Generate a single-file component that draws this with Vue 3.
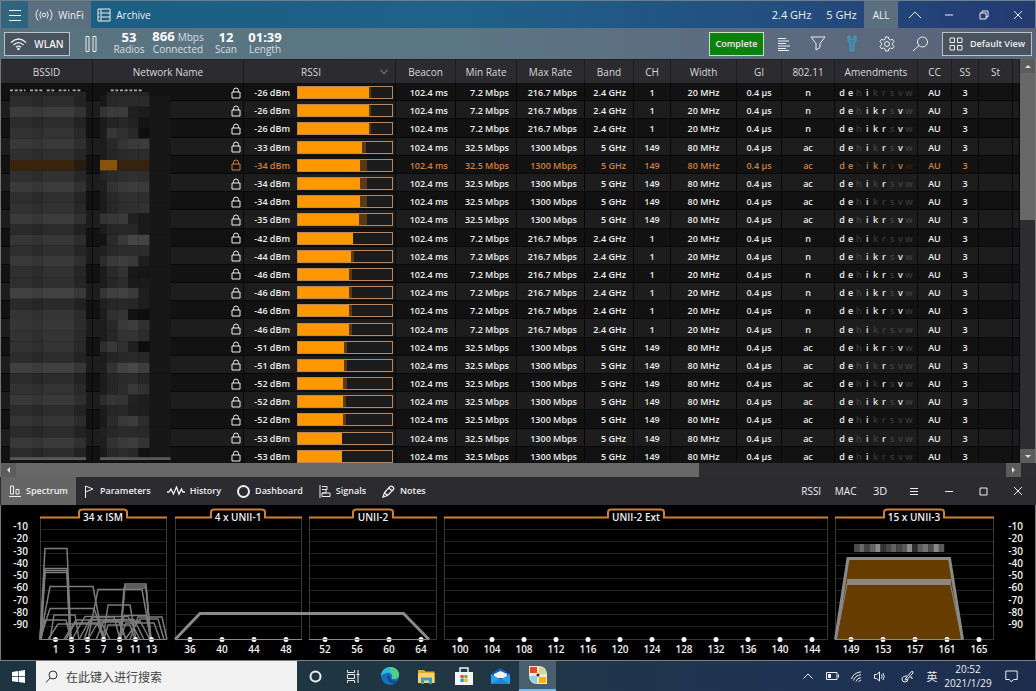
<script setup>
import { ref } from 'vue'

const columns = [
  { name: 'BSSID', width: 92 },
  { name: 'Network Name', width: 151 },
  { name: 'RSSI', width: 152 },
  { name: 'Beacon', width: 60 },
  { name: 'Min Rate', width: 61 },
  { name: 'Max Rate', width: 68 },
  { name: 'Band', width: 49 },
  { name: 'CH', width: 37 },
  { name: 'Width', width: 66 },
  { name: 'GI', width: 45 },
  { name: '802.11', width: 53 },
  { name: 'Amendments', width: 83 },
  { name: 'CC', width: 34 },
  { name: 'SS', width: 27 },
  { name: 'St', width: 34 },
  { name: '', width: 7 },
]

const n = { min: '7.2 Mbps', max: '216.7 Mbps', band: '2.4 GHz', ch: 1, width: '20 MHz', mode: 'n' }
const ac = { min: '32.5 Mbps', max: '1300 Mbps', band: '5 GHz', ch: 149, width: '80 MHz', mode: 'ac' }

// rssi, radio type, active amendments, fill percent, recent peak percent
const rows = [
  [-26, n, 'dei', 75, 78],
  [-26, n, 'deikrv', 75, 78],
  [-26, n, 'deikrv', 75, 78],
  [-33, ac, 'deirv', 68, 72],
  [-34, ac, 'deikrv', 66, 73],
  [-34, ac, 'deir', 66, 73],
  [-34, ac, 'dei', 66, 73],
  [-35, ac, 'deikrv', 65, 73],
  [-42, n, 'dei', 58, 58],
  [-44, n, 'deikrv', 56, 60],
  [-46, n, 'deikrv', 54, 57],
  [-46, n, 'deikrv', 54, 57],
  [-46, n, 'deikrv', 54, 57],
  [-46, n, 'dei', 54, 57],
  [-51, ac, 'deikrv', 49, 52],
  [-51, ac, 'deir', 49, 52],
  [-52, ac, 'deirv', 48, 52],
  [-52, ac, 'deikrv', 48, 51],
  [-52, ac, 'dei', 48, 51],
  [-53, ac, 'deir', 47, 47],
  [-53, ac, 'dei', 47, 47],
]
const letters = [...'dehikrsvw']
const selected = ref(4)

// Redaction mosaic: one line per block row, bssid shade then five name shades.
const mosaic = [
  '2a 18 28 2a 2a 2a', '3a 34 3c 3c 20 1c', '2a 1c 24 26 22 14', '30 1c 36 30 28 0e', '36 1c 28 34 3a 3c',
  '2d 1c 26 2a 2c 2c', 'o', '2e 24 2a 2e 30 2e', '38 1e 32 38 3c 3a', '2c 1c 28 2e 30 2e', '2f 1c 28 2e 30 32',
  '38 34 38 3a 20 1a', '28 1c 26 28 26 1a', '34 14 2a 38 46 44', '2c 20 28 2c 2c 2c', '36 2c 3a 3e 38 1e',
  '2e 1c 2a 32 18 16', '2c 1c 26 2c 1a 1a', '3f 36 40 42 3a 1e', '28 20 26 28 26 1e', '32 1e 30 34 12 0e',
  '34 1c 28 38 3e 30', '31 1c 26 32 34 2c', '30 2e 38 30 1e 0c', '2a 1c 24 28 2a 28', '3d 1e 32 42 48 3e',
  '29 1c 26 2a 2c 26', '30 1c 26 2c 38 30', '36 2c 36 34 22 1e', '2a 1c 26 28 20 1e', '33 1a 2a 38 3c 2c',
  '29 20 26 2a 2a 28', '37 1e 32 3a 3e 34', '29 1a 28 2c 28 12',
].map((s) => s.split(' '))
const bssidParts = [[30, 66, 2], [96, 32, -2], [128, 96, 3], [224, 34, -7]]
const nameParts = [[300, 20], [320, 32], [352, 32], [384, 32], [416, 33]]
const gray = (hex, d = 0) => {
  const v = Math.max(0, parseInt(hex, 16) + d)
  return `rgb(${v},${v},${v})`
}

const stats = [
  { value: '53', unit: '', label: 'Radios', width: 36 },
  { value: '866', unit: 'Mbps', label: 'Connected', width: 58 },
  { value: '12', unit: '', label: 'Scan', width: 34 },
  { value: '01:39', unit: '', label: 'Length', width: 40 },
]

const panels = [
  { label: '34 x ISM', x1: 40, x2: 167, cx: 103, half: 24 },
  { label: '4 x UNII-1', x1: 175, x2: 302, cx: 238, half: 27 },
  { label: 'UNII-2', x1: 309, x2: 437, cx: 373, half: 20 },
  { label: 'UNII-2 Ext', x1: 444, x2: 828, cx: 636, half: 28 },
  { label: '15 x UNII-3', x1: 835, x2: 994, cx: 914, half: 30 },
]
const grid = [529, 541, 553, 565, 578, 590, 602, 614, 626]
const levels = [-10, -20, -30, -40, -50, -60, -70, -80, -90]
const channels = [
  ...[1, 3, 5, 7, 9, 11, 13].map((c, i) => [c, 55.5 + i * 16, true]),
  ...[36, 40, 44, 48].map((c, i) => [c, 190 + i * 32, true]),
  ...[52, 56, 60, 64].map((c, i) => [c, 325 + i * 32, true]),
  ...[100, 104, 108, 112, 116, 120, 124, 128, 132, 136, 140, 144].map((c, i) => [c, 460 + i * 32, false]),
  ...[149, 153, 157, 161, 165].map((c, i) => [c, 851 + i * 32, i < 4]),
]
const tabPath = (p) =>
  `M${p.x1} 517.5H${p.cx - p.half}V512.500q0-3 3-3H${p.cx + p.half - 3}q3 0 3 3V517.5H${p.x2}`

// start, left shoulder, right shoulder, end, top
const signals = [
  [40, 45, 67, 71, 548.5], [40, 45, 67, 71, 568.5], [40, 45, 67, 70, 570.5], [41, 45, 67, 70, 572.5],
  [40, 50, 93, 103, 586.5], [40, 50, 94, 105, 608.5], [88, 98, 142, 151, 589.5], [103, 108, 130, 136, 605],
  [120, 125, 146, 150, 584], [120, 125, 146, 151, 586], [120, 124, 146, 151, 588],
  [50, 54, 75, 79, 615], [41, 45, 66, 71, 620], [48, 58, 102, 110, 624], [64, 76, 118, 126, 620],
  [72, 85, 128, 140, 616.5], [79, 90, 134, 144, 619.5], [66, 75, 97, 104, 623], [88, 98, 120, 126, 622],
  [104, 108, 130, 135, 625], [119, 124, 146, 151, 615.5], [130, 138, 162, 167, 617], [125, 140, 158, 164, 619],
  [120, 126, 154, 160, 623], [84, 92, 114, 120, 617], [96, 104, 140, 150, 621],
]
const shape = ([a, b, c, d, y]) => `M${a} 639.5L${b} ${y}H${c}L${d} 639.5`
const blur = ['4a', '6a', '40', '62', '8a', '34', '48', '62', '46', '58', '8c', '2c', '5c', '72', '4c', '8a', '58']

const tabs = ['Spectrum', 'Parameters', 'History', 'Dashboard', 'Signals', 'Notes']
const active = ref('Spectrum')
</script>

<template>
  <div class="app">
    <header class="titlebar">
      <button class="icon-btn menu" aria-label="Menu">
        <svg width="14" height="14" viewBox="0 0 14 14"><path d="M1 2.500H13M1 7.500H13M1 12.500H13" /></svg>
      </button>
      <button class="main-tab current">
        <svg width="18" height="14" viewBox="0 0 18 14">
          <circle cx="9" cy="7" r="1.800" />
          <path d="M6 3.500Q3.500 7 6 10.500M12 3.500Q14.500 7 12 10.500M3.200 1.500Q-1.200 7 3.200 12.500M14.800 1.500Q19.200 7 14.800 12.500" />
        </svg>
        WinFi
      </button>
      <button class="main-tab archive">
        <svg width="14" height="14" viewBox="0 0 14 14"><path d="M1 1H13V13H1ZM4 1V13M4 5H13M4 9H13M1 5H2.500M1 9H2.500" /></svg>
        Archive
      </button>
      <span class="spacer"></span>
      <button class="band-btn">2.4 GHz</button>
      <button class="band-btn">5 GHz</button>
      <div class="cells five">
        <button class="current">ALL</button>
        <button aria-label="Collapse"><svg width="14" height="8" viewBox="0 0 14 8"><path d="M1 7L7 1L13 7" /></svg></button>
        <button aria-label="Minimize"><svg width="10" height="10" viewBox="0 0 10 10"><path d="M1 5H9" /></svg></button>
        <button aria-label="Restore"><svg width="10" height="10" viewBox="0 0 10 10"><path d="M1 3H7V9H1ZM3 3V1H9V7H7" /></svg></button>
        <button aria-label="Close"><svg width="10" height="10" viewBox="0 0 10 10"><path d="M1 1L9 9M9 1L1 9" /></svg></button>
      </div>
    </header>

    <section class="toolbar">
      <button class="boxed wlan">
        <svg width="17" height="14" viewBox="0 0 17 14">
          <path class="wave" d="M1 5.500Q8.500-1.500 16 5.500M3.500 8Q8.500 3.200 13.500 8M6 10.300Q8.500 8 11 10.300" /><circle cx="8.500" cy="12" r="1.300" class="solid" />
        </svg>
        WLAN
      </button>
      <button class="icon-btn pause" aria-label="Pause">
        <svg width="12" height="16" viewBox="0 0 12 16"><path d="M1 .5H4V15.500H1ZM8 .5H11V15.500H8Z" /></svg>
      </button>
      <div v-for="s in stats" :key="s.label" class="stat" :style="{ width: s.width + 'px' }">
        <div class="stat-value"><b>{{ s.value }}</b><span v-if="s.unit">{{ s.unit }}</span></div>
        <div class="stat-label">{{ s.label }}</div>
      </div>
      <span class="spacer"></span>
      <button class="complete">Complete</button>
      <div class="cells five tools">
        <button aria-label="List"><svg width="12" height="14" viewBox="0 0 12 14"><path d="M0 1.500H8M0 4H11M0 6.500H8M0 9H12M0 11.500H8M0 13.500H11" /></svg></button>
        <button aria-label="Filter"><svg width="16" height="15" viewBox="0 0 16 15"><path d="M1 1H15L10 7.500V11.500L6 14V7.500Z" /></svg></button>
        <button aria-label="Tools"><svg class="wrench" width="10" height="17" viewBox="0 0 10 17"><path d="M1 1V6L3 8V16H7V8L9 6V1L7 1V4.500H3V1Z" /></svg></button>
        <button aria-label="Settings">
          <svg width="16" height="16" viewBox="0 0 16 16"><path d="M6.700 1H9.300L9.800 3L11.500 4L13.600 3.300L15 5.700L13.500 7.200V8.800L15 10.300L13.600 12.700L11.500 12L9.800 13L9.300 15H6.700L6.200 13L4.500 12L2.400 12.700L1 10.300L2.500 8.800V7.200L1 5.700L2.400 3.300L4.500 4L6.200 3Z" /><circle cx="8" cy="8" r="2.500" /></svg>
        </button>
        <button aria-label="Search"><svg width="17" height="16" viewBox="0 0 17 16"><circle cx="10.500" cy="6" r="5" /><path d="M7 9.500L1 15" /></svg></button>
      </div>
      <button class="boxed view">
        <svg width="14" height="14" viewBox="0 0 14 14"><path d="M1 1H5.500V5.500H1ZM8.500 1H13V5.500H8.500ZM1 8.500H5.500V13H1ZM8.500 8.500H13V13H8.500Z" /></svg>
        Default View
      </button>
    </section>

    <main class="table-pane">
      <div class="table-wrap">
        <table>
          <colgroup><col v-for="(c, i) in columns" :key="i" :width="c.width" /></colgroup>
          <thead>
            <tr>
              <th v-for="(c, i) in columns" :key="i" :class="{ sorted: c.name === 'RSSI' }">
                <div class="th-in">
                  <span>{{ c.name }}</span>
                  <svg v-if="c.name === 'RSSI'" width="8" height="6" viewBox="0 0 8 6"><path d="M.5 .5L4 5L7.500 .5" /></svg>
                </div>
              </th>
            </tr>
          </thead>
          <tbody>
            <tr v-for="(r, i) in rows" :key="i" :class="{ selected: i === selected }" @click="selected = i">
              <td></td>
              <td class="lock">
                <svg width="10" height="12" viewBox="0 0 10 12"><path d="M1 5H9V11H1ZM2.500 5V3.500Q2.500 1 5 1T7.500 3.500V5" /></svg>
              </td>
              <td>
                <div class="rssi">
                  <span>{{ r[0] }} dBm</span>
                  <div class="bar">
                    <div class="peak" :style="{ width: r[4] + '%' }"></div>
                    <div class="fill" :style="{ width: r[3] + '%' }"></div>
                  </div>
                </div>
              </td>
              <td class="right">102.4 ms</td>
              <td class="right">{{ r[1].min }}</td>
              <td class="right">{{ r[1].max }}</td>
              <td class="right">{{ r[1].band }}</td>
              <td>{{ r[1].ch }}</td>
              <td>{{ r[1].width }}</td>
              <td>0.4 µs</td>
              <td>{{ r[1].mode }}</td>
              <td>
                <div class="amend">
                  <span v-for="l in letters" :key="l" :class="{ off: !r[2].includes(l) }">{{ l }}</span>
                </div>
              </td>
              <td>AU</td>
              <td>3</td>
              <td></td>
              <td></td>
            </tr>
          </tbody>
        </table>
        <svg class="mosaic" width="171" height="380" viewBox="3 249 513 1140" aria-hidden="true">
          <path class="remnant" d="M30 271H76M90 271H132M140 271H166M176 271H208M218 271H242M332 271H430" />
          <rect x="30" y="276" width="228" height="12" fill="#242424" />
          <rect x="320" y="276" width="129" height="12" fill="#242424" />
          <g v-for="(m, k) in mosaic" :key="k">
            <template v-if="m[0] === 'o'">
              <rect x="30" :y="288 + k * 32" width="194" height="32" fill="#3a240c" />
              <rect x="224" :y="288 + k * 32" width="34" height="32" fill="#281c10" />
              <rect x="300" :y="288 + k * 32" width="52" height="32" fill="#855310" />
              <rect x="352" :y="288 + k * 32" width="97" height="32" fill="#35230f" />
            </template>
            <template v-else>
              <rect v-for="b in bssidParts" :key="b[0]" :x="b[0]" :y="288 + k * 32" :width="b[1]" height="32" :fill="gray(m[0], b[2])" />
              <rect v-for="(p, j) in nameParts" :key="p[0]" :x="p[0]" :y="288 + k * 32" :width="p[1]" height="32" :fill="gray(m[j + 1])" />
            </template>
            <rect x="449" :y="288 + k * 32" width="63" height="32" fill="#171717" />
          </g>
          <path class="strip" d="M30 1376H258M300 1376H512" />
        </svg>
      </div>
      <div class="vscroll">
        <button aria-label="Scroll up"><svg width="6" height="3" viewBox="0 0 6 3"><path d="M0 3L3 0L6 3Z" /></svg></button>
        <div class="vtrack"><div class="vthumb"></div></div>
        <button aria-label="Scroll down"><svg width="6" height="3" viewBox="0 0 6 3"><path d="M0 0L3 3L6 0Z" /></svg></button>
      </div>
    </main>

    <div class="hscroll">
      <button aria-label="Scroll left"><svg width="3" height="6" viewBox="0 0 3 6"><path d="M3 0L0 3L3 6Z" /></svg></button>
      <div class="htrack"><div class="hthumb"></div></div>
      <button aria-label="Scroll right"><svg width="3" height="6" viewBox="0 0 3 6"><path d="M0 0L3 3L0 6Z" /></svg></button>
    </div>

    <nav class="tabs">
      <button v-for="t in tabs" :key="t" :class="{ current: t === active }" @click="active = t">
        <svg v-if="t === 'Spectrum'" width="12" height="12" viewBox="0 0 12 12"><path d="M1.500 9V1H4.500V9ZM7 9V4.500H10V9ZM0 11.500H12" /></svg>
        <svg v-else-if="t === 'Parameters'" width="11" height="13" viewBox="0 0 11 13"><path d="M1.500 13V1L9 4L1.500 7" /></svg>
        <svg v-else-if="t === 'History'" width="18" height="10" viewBox="0 0 18 10"><path class="wave" d="M0 6H2L4 3L6.500 8L9.500 1L12 8L14.500 3L16 6H18" /></svg>
        <svg v-else-if="t === 'Dashboard'" width="13" height="13" viewBox="0 0 13 13"><circle cx="6.500" cy="6.500" r="5.500" class="ring" /></svg>
        <svg v-else-if="t === 'Signals'" width="12" height="13" viewBox="0 0 12 13"><path d="M1 0V13M3 1.500H8V4.500H3M3 4.500H7V8H3M3 8H11V11.500H3Z" /></svg>
        <svg v-else width="13" height="13" viewBox="0 0 13 13"><path class="wave" d="M1 12L2.500 7.500L8 1.500Q9.500 .5 11 2T11 5L5.500 10.500ZM7 3L10 6M2.500 7.500L5.500 10.500" /></svg>
        {{ t }}
      </button>
      <span class="spacer"></span>
      <div class="cells seven">
        <button>RSSI</button>
        <button>MAC</button>
        <button class="big">3D</button>
        <button aria-label="Options"><svg width="8" height="8" viewBox="0 0 8 8"><path d="M0 1.500H8M0 4.500H8M0 7.500H8" /></svg></button>
        <button aria-label="Minimize panel"><svg width="8" height="8" viewBox="0 0 8 8"><path d="M0 4.500H8" /></svg></button>
        <button aria-label="Maximize panel"><svg width="9" height="9" viewBox="0 0 9 9"><path d="M1 1H8V8H1Z" /></svg></button>
        <button aria-label="Close panel"><svg width="8" height="8" viewBox="0 0 8 8"><path d="M0 0L8 8M8 0L0 8" /></svg></button>
      </div>
    </nav>

    <svg class="chart" viewBox="1 505 1034 155" role="img" aria-label="Spectrum">
      <g v-for="p in panels" :key="p.label">
        <path class="grid" :d="grid.map((y) => `M${p.x1} ${y + 0.5}H${p.x2}`).join('')" />
        <path class="frame" :d="`M${p.x1 + 0.5} 518V639.5H${p.x2 - 0.5}V518`" />
        <path class="cap" :d="tabPath(p)" />
        <text :x="p.cx" y="521">{{ p.label }}</text>
      </g>
      <path class="area" d="M835 639.5L848 558H950L963 639.5Z" />
      <path class="sig thick" d="M835.5 639.500L848 558.500H949.500L962.500 639.500" />
      <path class="sig" d="M836 639.500L847.500 582H950L962 639.500M835 639.500H963" />
      <path class="band" d="M847 582H951" />
      <rect v-for="(b, i) in blur" :key="i" class="redact" :x="854 + i * 5.3" y="544" width="5.400" height="8" :fill="gray(b)" />
      <path class="sig thick" d="M175 639.500L200 613.500H403.500L429 639.500" />
      <path class="sig" d="M175 639.500H302M309 639.500H429M40 639.500H167" />
      <path v-for="(s, i) in signals" :key="i" class="sig trace" :d="shape(s)" />
      <g v-for="c in channels" :key="c[0]">
        <circle class="dot" :cx="c[1]" cy="639.500" r="2.500" />
        <path v-if="c[2]" class="sig" :d="`M${c[1] - 3} 639.5h6`" />
        <text :x="c[1]" y="653">{{ c[0] }}</text>
      </g>
      <g v-for="(l, i) in levels" :key="l">
        <text class="end" x="28" :y="530 + Math.round(i * 12.25)">{{ l }}</text>
        <text class="end" x="1023" :y="530 + Math.round(i * 12.25)">{{ l }}</text>
      </g>
    </svg>

    <footer class="taskbar">
      <button class="start" aria-label="Start">
        <svg width="13" height="13" viewBox="0 0 13 13"><path d="M0 2L6 1V6H0ZM6.700 .9L13 0V6H6.700ZM0 6.700H6V12L0 11.200ZM6.700 6.700H13V13L6.700 12.100Z" /></svg>
      </button>
      <label class="search">
        <svg width="13" height="13" viewBox="0 0 13 13"><circle cx="8" cy="5" r="4" /><path d="M5.200 8L1 12.500" /></svg>
        <input type="text" placeholder="在此键入进行搜索" aria-label="搜索" />
      </label>
      <button class="task" aria-label="Cortana"><svg width="13" height="13" viewBox="0 0 13 13"><circle cx="6.500" cy="6.500" r="5" class="ring" /></svg></button>
      <button class="task" aria-label="Task view"><svg width="14" height="13" viewBox="0 0 14 13"><path d="M1.500 0V2.500H8.500V0M1.500 4.500H8.500V8.500H1.500ZM1.500 13V10.500H8.500V13M12 0V13M10.500 4.500H13.500" /></svg></button>
      <button class="task" aria-label="Edge">
        <svg width="18" height="18" viewBox="0 0 18 18" class="plain">
          <circle cx="9" cy="9" r="9" fill="#1570c4" />
          <path d="M0 8C1 2 6 0 9 0C15 0 18 4 18 8C18 11 15 12.500 12 12Q10 11.500 11 10C12 7 8 5 5 6Q1 7 0 9Z" fill="#36b9d8" />
          <path d="M9 0C15 0 18 4 18 8C18 11 15 12.500 12 12Q10 11.500 11 10C12 7 10 5 8 5Q12 3 9 0Z" fill="#4fcf80" />
          <path d="M6.500 8Q5 16 13 16.500Q15.500 15.500 16.500 13.500Q9 15 8.500 9Z" fill="#0d4b8c" />
        </svg>
      </button>
      <button class="task" aria-label="Explorer">
        <svg width="17" height="15" viewBox="0 0 17 15" class="plain">
          <path d="M0 1H6L7.500 2.500H16.500V14H0Z" fill="#e3a52c" /><path d="M0 4H16.500V14H0Z" fill="#fcd462" />
          <path d="M3 8.500H14V15H11V11.500H6V15H3Z" fill="#3e97cf" />
        </svg>
      </button>
      <button class="task" aria-label="Store">
        <svg width="18" height="18" viewBox="0 0 18 18" class="plain">
          <path d="M0 5H18V18H0Z" fill="#f4f4f4" /><path d="M5 5V1H13V5" fill="none" stroke="#f4f4f4" stroke-width="1.500" />
          <path d="M5.500 8H8.700V11.200H5.500Z" fill="#e44b23" /><path d="M9.300 8H12.500V11.200H9.300Z" fill="#7cb518" />
          <path d="M5.500 11.800H8.700V15H5.500Z" fill="#1c9ae0" /><path d="M9.300 11.800H12.500V15H9.300Z" fill="#f6b50e" />
        </svg>
      </button>
      <button class="task" aria-label="Mail">
        <svg width="19" height="16" viewBox="0 0 19 16" class="plain">
          <path d="M0 6L9.500 0L19 6V16H0Z" fill="#1560ad" /><path d="M3 6L9.500 3L16 6V10H3Z" fill="#f3f3f3" />
          <path d="M0 6L9.500 11.500L19 6V16H0Z" fill="#27a1e8" /><path d="M0 16L9.500 10.500L19 16Z" fill="#1b86d6" />
        </svg>
      </button>
      <button class="task running" aria-label="WinFi">
        <svg width="20" height="20" viewBox="0 0 20 20" class="plain">
          <path d="M1 1H10Q19 1 19 10V19H10Q1 19 1 10Z" fill="#f1ead0" />
          <path d="M2 2H9V8H2Z" fill="#e6482a" /><path d="M11 2Q18 2 18 9H11Z" fill="#cfd894" />
          <path d="M2 11H9V18Q2 18 2 11Z" fill="#8fd0e4" /><path d="M11 12H18V18H11Z" fill="#f8b400" />
          <circle cx="10" cy="10" r="1.500" fill="#2b2b2b" />
        </svg>
      </button>
      <span class="spacer"></span>
      <button class="tray" aria-label="Hidden icons"><svg width="10" height="6" viewBox="0 0 10 6"><path d="M.5 5.500L5 1L9.500 5.500" /></svg></button>
      <button class="tray" aria-label="Battery"><svg width="13" height="8" viewBox="0 0 13 8"><path d="M.5 .5H11V7.500H.5ZM12.500 2.500V5.500" /><path d="M2 2H5V6H2Z" class="solid" /></svg></button>
      <button class="tray" aria-label="Network"><svg width="11" height="11" viewBox="0 0 11 11"><path d="M.5 8Q2 2 10 .8M2.500 9.500Q4 4.500 10 3.700M5 10.500Q6 7 10 6.500M7.500 10.500L10 9" /></svg></button>
      <button class="tray" aria-label="Volume"><svg width="12" height="11" viewBox="0 0 12 11"><path d="M.5 3.500H2.500L5.500 1V10L2.500 7.500H.5ZM7.500 3.500Q8.700 5.500 7.500 7.500M9 2Q11.500 5.500 9 9" /></svg></button>
      <button class="tray pen" aria-label="Pen"><svg width="13" height="13" viewBox="0 0 13 13"><path d="M5 8L10.500 1.500Q12.500 1 12 3L6 9.500Q3 11 5 8ZM6 6Q1 6 1 9T4 12Q7 12 7 9M9 7Q12 7 11 9" /></svg></button>
      <button class="tray ime">英</button>
      <div class="clock"><time>20:52</time><time>2021/1/29</time></div>
      <button class="tray notify" aria-label="Notifications"><svg width="13" height="13" viewBox="0 0 13 13"><path d="M.8 1H12.200V9.500H8.500L6.500 12L4.500 9.500H.8Z" /></svg></button>
    </footer>
  </div>
</template>

<style>
body {
  margin: 0;
  background: #000;
}
</style>

<style scoped>
.app {
  box-sizing: border-box;
  display: flex;
  flex-direction: column;
  min-height: 100vh;
  background: #121212;
  color: #eee;
  font-family: "Open Sans", "Noto Sans", "Noto Sans CJK SC", sans-serif;
  font-size: 10px;
  line-height: 14px;
}
button {
  display: flex;
  align-items: center;
  justify-content: center;
  box-sizing: border-box;
  margin: 0;
  padding: 0;
  border: 0;
  background: none;
  color: inherit;
  font: inherit;
  white-space: nowrap;
}
svg {
  flex: none;
  fill: none;
  stroke: currentColor;
}
.plain {
  stroke: none;
}
.solid {
  fill: currentColor;
  stroke: none;
}
.ring {
  stroke-width: 2;
}
.wave {
  stroke-width: 1.3;
}
.spacer {
  flex: 1;
}
.cells {
  display: grid;
  align-self: stretch;
}
.five {
  width: 171px;
  grid-template-columns: repeat(5, 1fr);
}
.seven {
  width: 241px;
  grid-template-columns: repeat(7, 1fr);
}

.titlebar {
  display: flex;
  align-items: stretch;
  height: 28px;
  box-sizing: border-box;
  border-top: 1px solid #6b7f8c;
  border-left: 1px solid #6b7f8c;
  border-right: 1px solid #6b7f8c;
  background: linear-gradient(90deg, #35657d 0, #1c5f84 9%, #1f6189 45%, #234e80 75%, #243a72 100%);
  font-weight: 500;
}
.menu {
  width: 27px;
}
.main-tab {
  gap: 5px;
  padding: 0 7px;
  width: 63px;
}
.archive {
  width: 66px;
}
.current {
  background: #5a7080;
}
.band-btn {
  width: 50px;
  padding-left: 5px;
  font-size: 11px;
}

.toolbar {
  display: flex;
  align-items: center;
  height: 31px;
  box-sizing: border-box;
  padding: 0 4px;
  background: linear-gradient(90deg, #58737f, #5b7783 40%, #5c6a80 75%, #5b6479);
}
.boxed {
  height: 24px;
  gap: 7px;
  border: 1px solid #b9c3cb;
  background: #48535e;
  font-weight: 600;
}
.wlan {
  width: 66px;
}
.pause {
  width: 41px;
}
.stat {
  margin-right: 2px;
  padding-bottom: 2px;
  text-align: center;
  white-space: nowrap;
}
.stat-value {
  display: flex;
  align-items: baseline;
  justify-content: center;
  gap: 3px;
  line-height: 13px;
  color: #d7dde1;
}
.stat-value b {
  font-size: 13px;
  color: #fff;
}
.stat-label {
  line-height: 11px;
  color: #d7dde1;
}
.complete {
  width: 55px;
  height: 24px;
  border: 1px solid #c9e0c4;
  background: #0b820b;
  font-size: 9px;
  font-weight: 600;
}
.tools {
  margin: 0 4px 0 3px;
}
.wrench {
  color: #35a6c4;
}
.wrench path {
  fill: #35a6c4;
  fill-opacity: 0.4;
}
.view {
  width: 90px;
  font-size: 9px;
}

.table-pane {
  flex: 1;
  min-height: 0;
  display: grid;
  grid-template-columns: 1fr 15px;
  border-left: 1px solid #777;
  border-right: 1px solid #777;
}
.table-wrap {
  position: relative;
  overflow: hidden;
  min-height: 0;
  height: 404px;
}
table {
  width: 100%;
  height: 406px;
  table-layout: fixed;
  border-collapse: separate;
  border-spacing: 0;
}
th {
  height: 24px;
  box-sizing: border-box;
  padding: 0;
  border-right: 1px solid #1c1c20;
  border-top: 1px solid #222;
  background: #2c2b30;
  color: #d8d8d8;
  font-size: 10px;
  font-weight: 500;
  white-space: nowrap;
}
.th-in {
  display: flex;
  align-items: center;
  justify-content: center;
}
.sorted .th-in {
  padding-left: 57px;
  padding-right: 7px;
  justify-content: space-between;
}
.sorted svg {
  color: #8a8a8a;
}
td {
  box-sizing: border-box;
  height: 18px;
  padding: 2px 0 0;
  border-right: 1px solid #080808;
  border-bottom: 1px solid #080808;
  background: #121212;
  text-align: center;
  font-size: 9px;
  font-weight: 600;
  line-height: 13px;
  white-space: nowrap;
}
tbody tr:nth-child(even) td {
  background: #1d1d1d;
}
.selected {
  color: #d08040;
}
td.right {
  text-align: right;
  padding-right: 7px;
}
td.lock {
  padding-right: 2px;
}
.lock svg {
  display: block;
  margin-left: auto;
}
.rssi {
  display: flex;
  align-items: center;
  justify-content: flex-end;
  gap: 7px;
  padding-right: 2px;
}
.bar {
  display: grid;
  width: 96px;
  height: 13px;
  box-sizing: border-box;
  border: 1px solid #b8855c;
  background: #1c1c1c;
}
.bar div {
  grid-area: 1 / 1;
}
.peak {
  background: #583a14;
}
.fill {
  background: #ff9800;
}
.amend {
  display: grid;
  grid-template-columns: repeat(9, 1fr);
  margin: 0 4px 0 3px;
}
.off {
  opacity: 0.16;
}
.mosaic {
  position: absolute;
  left: 0;
  top: 24px;
  stroke: none;
}
.remnant {
  stroke: #aaa;
  stroke-width: 5;
  stroke-dasharray: 9 5;
}
.strip {
  stroke: #5a5a5a;
  stroke-width: 8;
}
.vscroll {
  display: flex;
  flex-direction: column;
  background: #2d2c31;
}
.vscroll button,
.hscroll button {
  width: 15px;
  height: 14px;
  background: #5c5c5c;
}
.vscroll path,
.hscroll path {
  fill: #ddd;
  stroke: none;
}
.vtrack {
  flex: 1;
}
.vthumb {
  height: 39%;
  background: #686868;
}
.hscroll {
  display: flex;
  height: 14px;
  padding-right: 15px;
  background: #2d2c31;
  border-left: 1px solid #777;
}
.htrack {
  flex: 1;
}
.hthumb {
  width: 69%;
  height: 14px;
  background: #686868;
}

.tabs {
  display: flex;
  height: 28px;
  box-sizing: border-box;
  padding-left: 1px;
  padding-right: 1px;
  background: #2c2b30;
  font-weight: 500;
}
.tabs > button {
  gap: 5px;
  padding: 0 8px;
  font-size: 9px;
  font-weight: 600;
}
.tabs > .current {
  background: #656565;
}
.big {
  font-size: 11px;
}

.chart {
  display: block;
  width: 100%;
  box-sizing: border-box;
  background: #000;
  border-left: 1px solid #777;
  border-right: 1px solid #777;
}
.grid {
  stroke: #222;
}
.frame {
  stroke: #383838;
}
.cap {
  stroke: #cd8038;
  stroke-width: 2;
}
.chart text {
  fill: #f2f2f2;
  stroke: none;
  font-size: 10px;
  font-weight: 600;
  text-anchor: middle;
}
.chart .end {
  text-anchor: end;
}
.area {
  fill: #663c00;
  stroke: none;
}
.redact {
  stroke: none;
}
.dot {
  fill: #fff;
  stroke: none;
}
.sig {
  stroke: #8a8a8a;
}
.thick {
  stroke-width: 3;
}
.trace {
  stroke: #7c7c7c;
  stroke-width: 1.5;
}
.band {
  stroke: #8c8580;
  stroke-width: 6;
}

.taskbar {
  display: flex;
  height: 31px;
  box-sizing: border-box;
  border-top: 1px solid #7a8288;
  background: linear-gradient(90deg, #1d3440, #213744 45%, #1f3355 80%, #1d2c4c);
}
.start {
  width: 36px;
}
.start path {
  fill: #fff;
  stroke: none;
}
.search {
  display: flex;
  align-items: center;
  gap: 8px;
  width: 261px;
  box-sizing: border-box;
  padding: 0 9px;
  background: #f1f1f1;
  color: #333;
}
.search input {
  flex: 1;
  min-width: 0;
  padding: 0;
  border: 0;
  outline: 0;
  background: none;
  color: #333;
  font-family: "Noto Sans CJK SC", sans-serif;
  font-size: 12px;
}
.search input::placeholder {
  color: #444;
  opacity: 1;
}
.task {
  width: 37px;
}
.running {
  border-bottom: 2px solid #76b9ed;
  background: #4a5f6d;
}
.tray {
  width: 24px;
}
.pen {
  width: 30px;
}
.ime {
  width: 20px;
  font-family: "Noto Sans CJK SC", sans-serif;
  font-size: 11px;
}
.clock {
  display: flex;
  flex-direction: column;
  align-items: center;
  justify-content: center;
  width: 52px;
}
.notify {
  width: 34px;
  margin-right: 8px;
}
</style>
